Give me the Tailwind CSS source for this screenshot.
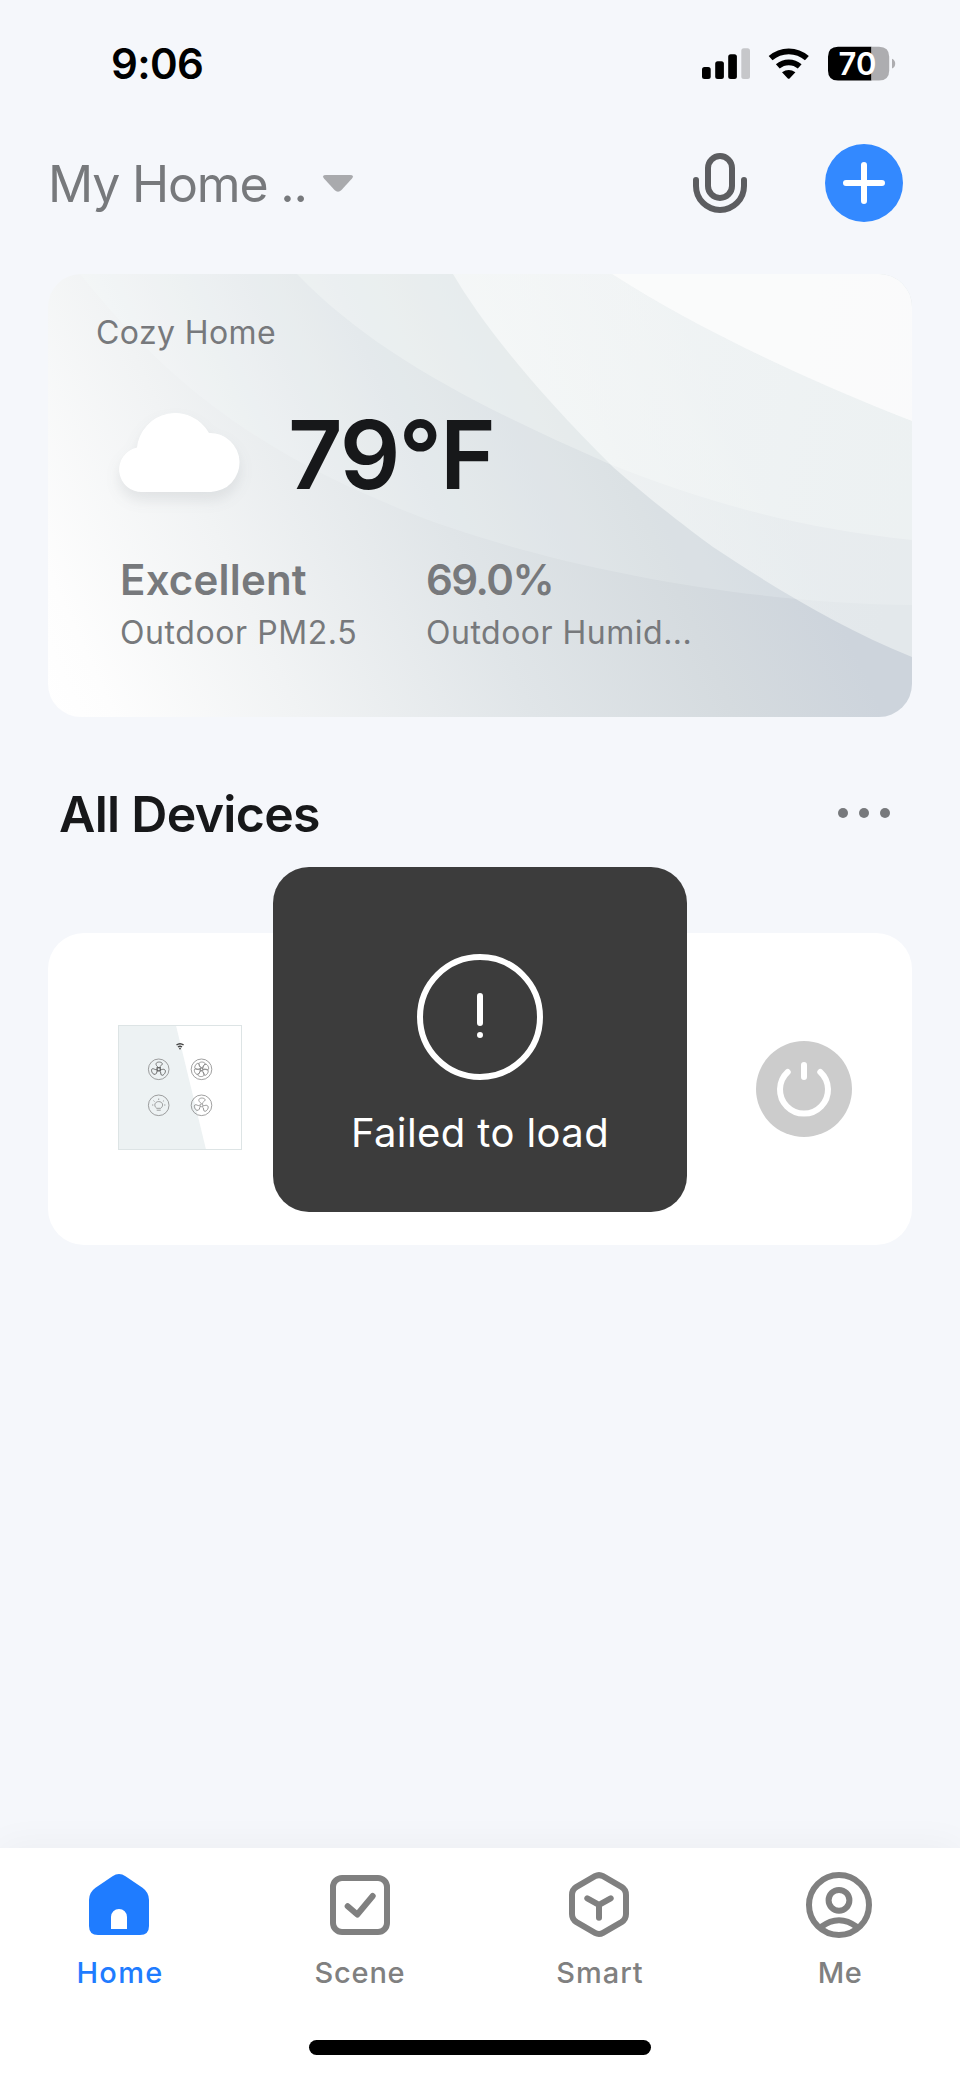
<!DOCTYPE html>
<html lang="en">
<head>
<meta charset="utf-8">
<title>Home</title>
<script src="https://cdn.jsdelivr.net/npm/@tailwindcss/browser@4"></script>
</head>
<body class="bg-[#f5f7fb] font-['Inter',sans-serif]">
<div class="relative flex h-[2079px] w-[960px] flex-col overflow-hidden bg-[#f5f7fb]">

  <!-- Status bar -->
  <div class="flex h-32 shrink-0 items-center justify-between pr-[60px] pl-[111px]">
    <span class="text-[42px] leading-[50px] font-semibold tracking-[-0.65px] text-black">9:06</span>
    <svg class="h-10 w-50" viewBox="700 44 200 40">
      <rect x="702" y="67" width="8.7" height="12" rx="2.5"/>
      <rect x="715.2" y="61.3" width="8.7" height="17.7" rx="2.5"/>
      <rect x="728.2" y="54.3" width="8.7" height="24.7" rx="2.5"/>
      <rect x="741.3" y="48.3" width="8.7" height="30.7" rx="2.5" fill="#c6c7ca"/>
      <path d="M770.6 58.2A27.3 27.3 0 0 1 806.9 58.2M777.8 66.4A16.8 16.8 0 0 1 799.7 66.4" fill="none" stroke="#000" stroke-width="5.8"/>
      <path d="M782 72.2Q788.7 67.6 795.4 72.2L789.8 78.2Q788.7 79.4 787.6 78.2Z"/>
      <path d="M838 46.8H871.5V80.6H838Q828 80.6 828 70.6V56.8Q828 46.8 838 46.8Z"/>
      <path d="M871.5 46.8H879Q889.2 46.8 889.2 56.8V70.6Q889.2 80.6 879 80.6H871.5Z" fill="#adadb0"/>
      <path d="M892 58.8Q895.2 60.2 895.2 63.7T892 68.6Z" fill="#adadb0"/>
      <text x="838.500" y="74.8" font-size="31" font-weight="600" letter-spacing="0.2" fill="#fff">70</text>
    </svg>
  </div>

  <!-- Header -->
  <header class="flex h-28 shrink-0 items-center pr-[57px] pl-12">
    <h1 class="text-[50px] leading-[60px] tracking-[-1.18px] text-[#77797c]">My Home ..</h1>
    <svg class="ml-[15px] h-5 w-8" viewBox="322 174 32 20"><path d="M326 175H350Q354.500 175 352 178.400L341.500 190Q338 193.600 334.500 190L324 178.400Q321.500 175 326 175Z" fill="#a9aaad"/></svg>
    <svg class="mr-[75px] ml-auto h-[68px] w-[60px]" viewBox="690 150 60 68" fill="none" stroke="#5c5d60" stroke-width="6" stroke-linecap="round">
      <rect x="708" y="156" width="24" height="42" rx="12"/>
      <path d="M696 180v6a24 24 0 0 0 48 0v-6"/>
    </svg>
    <svg class="-mt-0.5 h-[78px] w-[78px]" viewBox="0 0 78 78"><circle cx="39" cy="39" r="39" fill="#3389ff"/><path d="M21 39H57M39 21V57" stroke="#fff" stroke-width="6" stroke-linecap="round"/></svg>
  </header>

  <!-- Weather card -->
  <section class="relative mx-12 mt-[34px] h-[443px] shrink-0 overflow-hidden rounded-[33px]">
    <svg class="absolute inset-0 h-full w-full" viewBox="48 274 864 443" preserveAspectRatio="none">
      <defs>
        <linearGradient id="sky" gradientUnits="userSpaceOnUse" x1="48" y1="717" x2="740" y2="400">
          <stop offset="0" stop-color="#fff"/><stop offset=".08" stop-color="#fdfdfd"/><stop offset=".3" stop-color="#f1f3f4"/><stop offset=".58" stop-color="#e0e5e8"/><stop offset=".82" stop-color="#d5dbdf"/><stop offset="1" stop-color="#cdd4dc"/>
        </linearGradient>
        <linearGradient id="band" gradientUnits="userSpaceOnUse" x1="500" y1="400" x2="912" y2="480">
          <stop offset="0" stop-color="#fcfdfd" stop-opacity=".62"/><stop offset="1" stop-color="#f9fcfa" stop-opacity=".5"/>
        </linearGradient>
      </defs>
      <path fill="url(#sky)" d="M48 274H912V717H48Z"/>
      <path fill="#fbfffd" fill-opacity=".18" d="M80 274C180 400 280 460 400 509S720 603 912 605V274Z"/>
      <path fill="#fbfffd" fill-opacity=".3" d="M297 274C370 350 470 403 607 463C700 500 790 527 912 540V274Z"/>
      <path fill="url(#band)" d="M453 274C480 320 530 385 613 467C650 500 690 530 713 547C770 585 840 628 912 657V274Z"/>
      <path fill="#fcfdfc" fill-opacity=".8" d="M612 274C690 324 800 378 912 421V274Z"/>
    </svg>
    <div class="relative flex flex-col pt-[39px] pl-12 text-[#77797c]">
      <p class="text-[32px] leading-10 tracking-[0.4px]">Cozy Home</p>
      <div class="mt-[52px] ml-6 flex h-25 items-center gap-12">
        <svg class="h-25 w-[120px] overflow-visible drop-shadow-[0_8px_7px_rgba(60,70,80,0.10)]" viewBox="120 405 120 100">
          <path fill="#fff" d="M142.500 492A22.500 22.500 0 0 1 137 447.500A38.500 38.500 0 0 1 209 433A29.500 29.500 0 0 1 211 492Z"/>
        </svg>
        <p class="text-[95px] leading-[100px] font-semibold tracking-[-2px] text-[#17181a]">79°F</p>
      </div>
      <div class="mt-[50px] ml-6 flex">
        <div class="w-[306px]">
          <p class="text-[42px] leading-[50px] font-semibold tracking-[0.2px]">Excellent</p>
          <p class="mt-2 text-[32px] leading-10 tracking-[0.58px]">Outdoor PM2.5</p>
        </div>
        <div>
          <p class="text-[42px] leading-[50px] font-semibold tracking-[-1.5px]">69.0%</p>
          <p class="mt-2 text-[32px] leading-10 tracking-[0.5px]">Outdoor Humid...</p>
        </div>
      </div>
    </div>
  </section>

  <!-- Section heading -->
  <div class="mt-[47px] flex h-25 shrink-0 items-center justify-between pr-[70px] pl-[59px]">
    <h2 class="text-[50px] leading-[60px] font-semibold tracking-[-0.7px] text-[#17181a]">All Devices</h2>
    <div class="-mt-0.5 flex gap-[10.600px]">
      <i class="h-[10.400px] w-[10.400px] rounded-full bg-[#77797c]"></i>
      <i class="h-[10.400px] w-[10.400px] rounded-full bg-[#77797c]"></i>
      <i class="h-[10.400px] w-[10.400px] rounded-full bg-[#77797c]"></i>
    </div>
  </div>

  <!-- Device card -->
  <section class="mx-12 mt-[69px] flex h-[312px] shrink-0 items-center justify-between rounded-[36px] bg-white pr-[60px] pl-[68px]">
    <svg class="h-33 w-32" viewBox="116 1023 128 132" fill="none">
      <defs>
        <g id="blade"><path d="M0 -1.500C-1.500 -3 -3.800 -4.600 -2 -6.600C0 -8 4 -7 3.600 -5.200C3.300 -3.700 .8 -3.600 1 -1.500"/></g>
        <g id="fan"><use href="#blade"/><use href="#blade" transform="rotate(120)"/><use href="#blade" transform="rotate(240)"/><circle r="1.400"/></g>
      </defs>
      <path d="M118.500 1025.500H176L206 1149.500H118.500Z" fill="#edf2f3"/>
      <rect x="118.500" y="1025.500" width="123" height="124" stroke="#dde4e5"/>
      <path d="M176.500 1045Q180 1042.300 183.600 1045M178 1047Q180 1045.500 182 1047" stroke="#444" stroke-width="1.500"/>
      <circle cx="180" cy="1048.600" r=".9" fill="#444"/>
      <g stroke="#808080" stroke-width=".75">
        <circle cx="158.700" cy="1069.300" r="10.300"/><circle cx="201.500" cy="1069.300" r="10.300"/>
        <circle cx="158.700" cy="1105.300" r="10.300"/><circle cx="201.500" cy="1105.300" r="10.300"/>
        <use href="#fan" transform="translate(158.700 1069.300)" stroke="#555"/>
        <rect x="157" y="1067.500" width="3.500" height="3.500" stroke="#555"/>
        <use href="#fan" transform="translate(201.500 1069.300)"/>
        <use href="#fan" transform="translate(201.500 1069.300) rotate(60)"/>
        <use href="#fan" transform="translate(201.500 1105.300)"/>
        <path d="M156.700 1108.300C153.500 1106 154.500 1101.600 158.700 1101.600S163.900 1106 160.700 1108.300ZM156.700 1110.200H160.700M158.700 1098.500V1100M153.500 1100.600L154.500 1101.500M163.900 1100.600L162.900 1101.500M152 1105H153.300M164.100 1105H165.400"/>
      </g>
    </svg>
    <svg class="h-24 w-24" viewBox="0 0 96 96"><circle cx="48" cy="48" r="48" fill="#ccc"/><path d="M31.700 31A24 24 0 1 0 64.300 31M48 24V36" fill="none" stroke="#fff" stroke-width="6" stroke-linecap="round"/></svg>
  </section>

  <!-- Tab bar -->
  <nav class="mt-auto flex h-[231px] shrink-0 flex-col bg-white pt-[21px] shadow-[0_-2px_36px_rgba(0,0,0,0.045)]">
    <div class="grid grid-cols-4 text-[29px] leading-9 font-medium text-[#808080]">
      <a class="flex flex-col items-center gap-[14px] text-[#1f7cff]">
        <svg class="h-18 w-18" viewBox="0 0 72 72"><path fill="currentColor" fill-rule="evenodd" d="M28.500 7.300Q35 2.900 41.500 7.300L58.500 18.800Q65 23.500 65 31V57Q65 66 56 66H14Q5 66 5 57V31Q5 23.500 11.500 18.800ZM27 60V48a8 8 0 0 1 16 0V60Z"/></svg>
        <span class="tracking-[1.3px]">Home</span>
      </a>
      <a class="flex flex-col items-center gap-[14px]">
        <svg class="h-18 w-18" viewBox="0 0 72 72" fill="none" stroke="currentColor" stroke-width="6"><rect x="9" y="9" width="54" height="54" rx="9"/><path d="M23.700 37.300L33.300 45.500L48.700 27" stroke-linecap="round" stroke-linejoin="round"/></svg>
        <span class="tracking-[0.76px]">Scene</span>
      </a>
      <a class="flex flex-col items-center gap-[14px]">
        <svg class="h-18 w-18" viewBox="0 0 72 72" fill="none" stroke="currentColor" stroke-width="6" stroke-linecap="round" stroke-linejoin="round"><path d="M31 7.200Q35 5 39 7.200L57.500 17.900Q62 20.700 62 26V45Q62 50.300 57.500 53.100L39 63.800Q35 66 31 63.800L12.500 53.100Q8 50.300 8 45V26Q8 20.700 12.500 17.900ZM23.300 29.300L35 35.800L46.700 29.300M35 36V48.700"/></svg>
        <span class="tracking-[0.96px]">Smart</span>
      </a>
      <a class="flex flex-col items-center gap-[14px]">
        <svg class="h-18 w-18" viewBox="0 0 72 72" fill="none" stroke="currentColor" stroke-width="6"><circle cx="35" cy="36" r="30"/><circle cx="35" cy="31.300" r="10.400"/><path d="M17 58Q35 44.500 53 58"/></svg>
        <span class="tracking-[0.53px]">Me</span>
      </a>
    </div>
    <div class="mx-auto mt-auto mb-6 h-[15px] w-[342px] rounded-full bg-black"></div>
  </nav>

  <!-- Toast -->
  <div class="absolute top-[867px] left-[273px] flex h-[345px] w-[414px] flex-col items-center rounded-[36px] bg-[#3c3c3c] pt-[87px] text-white">
    <svg class="h-[126px] w-[126px]" viewBox="0 0 126 126" fill="none" stroke="#fff" stroke-width="6" stroke-linecap="round"><circle cx="63" cy="63" r="60"/><path d="M63 42V69M63 81V81.010"/></svg>
    <p class="mt-[28px] text-[40px] leading-[50px] tracking-[0.4px]">Failed to load</p>
  </div>
</div>
</body>
</html>
